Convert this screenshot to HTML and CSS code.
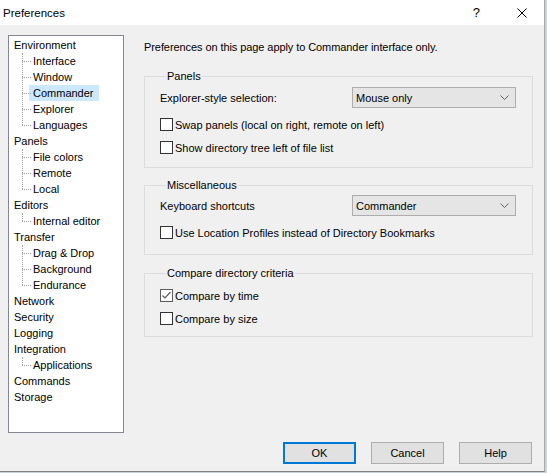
FILE: index.html
```html
<!DOCTYPE html>
<html>
<head>
<meta charset="utf-8">
<title>Preferences</title>
<link rel="stylesheet" href="styles.css">
</head>
<body>
<div class="window">
  <div class="titlebar">
    <span class="title">Preferences</span>
    <span class="help">?</span>
    <svg class="close" width="10" height="10" viewBox="0 0 10 10"><path d="M0.5 0.5 L9.5 9.5 M9.5 0.5 L0.5 9.5" stroke="#000" stroke-width="1" fill="none"/></svg>
  </div>
  <div class="body">
    <div class="main">
      <div class="tree">
        <ul class="roots">
          <li><span class="node">Environment</span>
            <ul class="kids">
              <li><span class="node">Interface</span></li>
              <li><span class="node">Window</span></li>
              <li><span class="node selected">Commander</span></li>
              <li><span class="node">Explorer</span></li>
              <li><span class="node">Languages</span></li>
            </ul>
          </li>
          <li><span class="node">Panels</span>
            <ul class="kids">
              <li><span class="node">File colors</span></li>
              <li><span class="node">Remote</span></li>
              <li><span class="node">Local</span></li>
            </ul>
          </li>
          <li><span class="node">Editors</span>
            <ul class="kids">
              <li><span class="node">Internal editor</span></li>
            </ul>
          </li>
          <li><span class="node">Transfer</span>
            <ul class="kids">
              <li><span class="node">Drag &amp; Drop</span></li>
              <li><span class="node">Background</span></li>
              <li><span class="node">Endurance</span></li>
            </ul>
          </li>
          <li><span class="node">Network</span></li>
          <li><span class="node">Security</span></li>
          <li><span class="node">Logging</span></li>
          <li><span class="node">Integration</span>
            <ul class="kids">
              <li><span class="node">Applications</span></li>
            </ul>
          </li>
          <li><span class="node">Commands</span></li>
          <li><span class="node">Storage</span></li>
        </ul>
      </div>
      <div class="pane">
        <p class="intro">Preferences on this page apply to Commander interface only.</p>
        <fieldset class="group g-panels">
          <legend>Panels</legend>
          <div class="row-combo">
            <span class="combo-label">Explorer-style selection:</span>
            <div class="combo"><span>Mouse only</span><svg class="chev" width="9" height="5" viewBox="0 0 9 5"><path d="M0.5 0.5 L4.5 4.5 L8.5 0.5" stroke="#606060" fill="none"/></svg></div>
          </div>
          <label class="check-row"><span class="box"></span>Swap panels (local on right, remote on left)</label>
          <label class="check-row"><span class="box"></span>Show directory tree left of file list</label>
        </fieldset>
        <fieldset class="group g-misc">
          <legend>Miscellaneous</legend>
          <div class="row-combo">
            <span class="combo-label">Keyboard shortcuts</span>
            <div class="combo"><span>Commander</span><svg class="chev" width="9" height="5" viewBox="0 0 9 5"><path d="M0.5 0.5 L4.5 4.5 L8.5 0.5" stroke="#606060" fill="none"/></svg></div>
          </div>
          <label class="check-row"><span class="box"></span>Use Location Profiles instead of Directory Bookmarks</label>
        </fieldset>
        <fieldset class="group g-compare">
          <legend>Compare directory criteria</legend>
          <label class="check-row"><span class="box checked"><svg width="11" height="11" viewBox="0 0 11 11"><path d="M1.5 5.5 L4 8 L9.5 2" stroke="#5a5a5a" stroke-width="1.2" fill="none"/></svg></span>Compare by time</label>
          <label class="check-row"><span class="box"></span>Compare by size</label>
        </fieldset>
      </div>
    </div>
    <div class="buttons">
      <button class="btn default">OK</button>
      <button class="btn">Cancel</button>
      <button class="btn">Help</button>
    </div>
  </div>
</div>
</body>
</html>
```
FILE: styles.css
```css
html, body {
  margin: 0;
  padding: 0;
}
body {
  background: #c9d3df;
  font-family: "Liberation Sans", Arial, sans-serif;
  font-size: 11px;
  color: #000;
  width: 547px;
  height: 473px;
  overflow: hidden;
}
.window {
  width: 544px;
  height: 471px;
  border-right: 1px solid #a8a8a8;
  border-bottom: 1px solid #808080;
  display: flex;
  flex-direction: column;
  background: #f0f0f0;
}
.titlebar {
  height: 25px;
  background: #fff;
  display: flex;
  align-items: center;
  flex: none;
}
.title {
  font-size: 11.5px;
  margin-left: 3px;
  flex: 1;
}
.help {
  font-size: 13px;
  margin-right: 37px;
}
.close {
  margin-right: 17px;
}
.body {
  flex: 1;
  display: flex;
  flex-direction: column;
}
.main {
  display: flex;
  padding: 10px 0 0 8px;
}
.tree {
  width: 114px;
  height: 396px;
  background: #fff;
  border: 1px solid #828790;
  flex: none;
}
.roots, .kids {
  list-style: none;
  margin: 0;
  padding: 0;
}
.roots {
  padding-top: 1px;
}
.roots > li > .node {
  margin-left: 3px;
}
.node {
  display: inline-block;
  height: 16px;
  line-height: 16px;
  padding: 0 3px 0 2px;
}
.kids {
  position: relative;
  padding-left: 22px;
}
.kids::before {
  content: "";
  position: absolute;
  left: 13px;
  top: 0;
  bottom: 8px;
  border-left: 1px dotted #a0a0a0;
}
.kids > li {
  position: relative;
}
.kids > li::before {
  content: "";
  position: absolute;
  left: -9px;
  top: 8px;
  width: 9px;
  border-top: 1px dotted #a0a0a0;
}
.node.selected {
  background: #cce8ff;
  padding: 0 5px 0 4px;
  margin-left: -2px;
}
.pane {
  margin-left: 20px;
  width: 389px;
}
.intro {
  margin: 0;
  padding-top: 5px;
  line-height: 14px;
  letter-spacing: -0.08px;
}
.group {
  margin: 0;
  border: 1px solid #dcdcdc;
  padding: 0 15px 0 15px;
  min-width: 0;
}
.group legend {
  padding: 0 1px;
  margin-left: 6px;
  line-height: 13px;
}
.g-panels {
  margin-top: 16px;
  padding-top: 4px;
  padding-bottom: 8px;
}
.g-misc {
  margin-top: 11px;
  padding-top: 3px;
  padding-bottom: 10px;
}
.g-compare {
  margin-top: 12px;
  padding-top: 4px;
  padding-bottom: 6px;
}
.row-combo {
  display: flex;
  align-items: center;
  height: 21px;
  margin-bottom: 5px;
}
.combo-label {
  width: 192px;
  flex: none;
}
.combo {
  height: 19px;
  border: 1px solid #adadad;
  background: #e5e5e5;
  display: flex;
  align-items: center;
  justify-content: space-between;
  padding: 0 0 0 3px;
  box-sizing: content-box;
  width: 159px;
}
.chev {
  margin-right: 6px;
}
.check-row {
  display: flex;
  align-items: center;
  height: 23px;
}
.box {
  width: 11px;
  height: 11px;
  border: 1px solid #333;
  background: #fff;
  margin-right: 2px;
  flex: none;
  display: flex;
  align-items: center;
  justify-content: center;
}
.box.checked {
  border-color: #5a5a5a;
}
.buttons {
  display: flex;
  justify-content: flex-end;
  gap: 15px;
  padding-right: 12px;
  margin-top: 9px;
}
.btn {
  width: 73px;
  height: 22px;
  background: #e1e1e1;
  border: 1px solid #adadad;
  font-family: "Liberation Sans", Arial, sans-serif;
  font-size: 11px;
  color: #000;
  padding: 0;
  margin: 0;
}
.btn.default {
  border: 2px solid #0078d7;
}
```
